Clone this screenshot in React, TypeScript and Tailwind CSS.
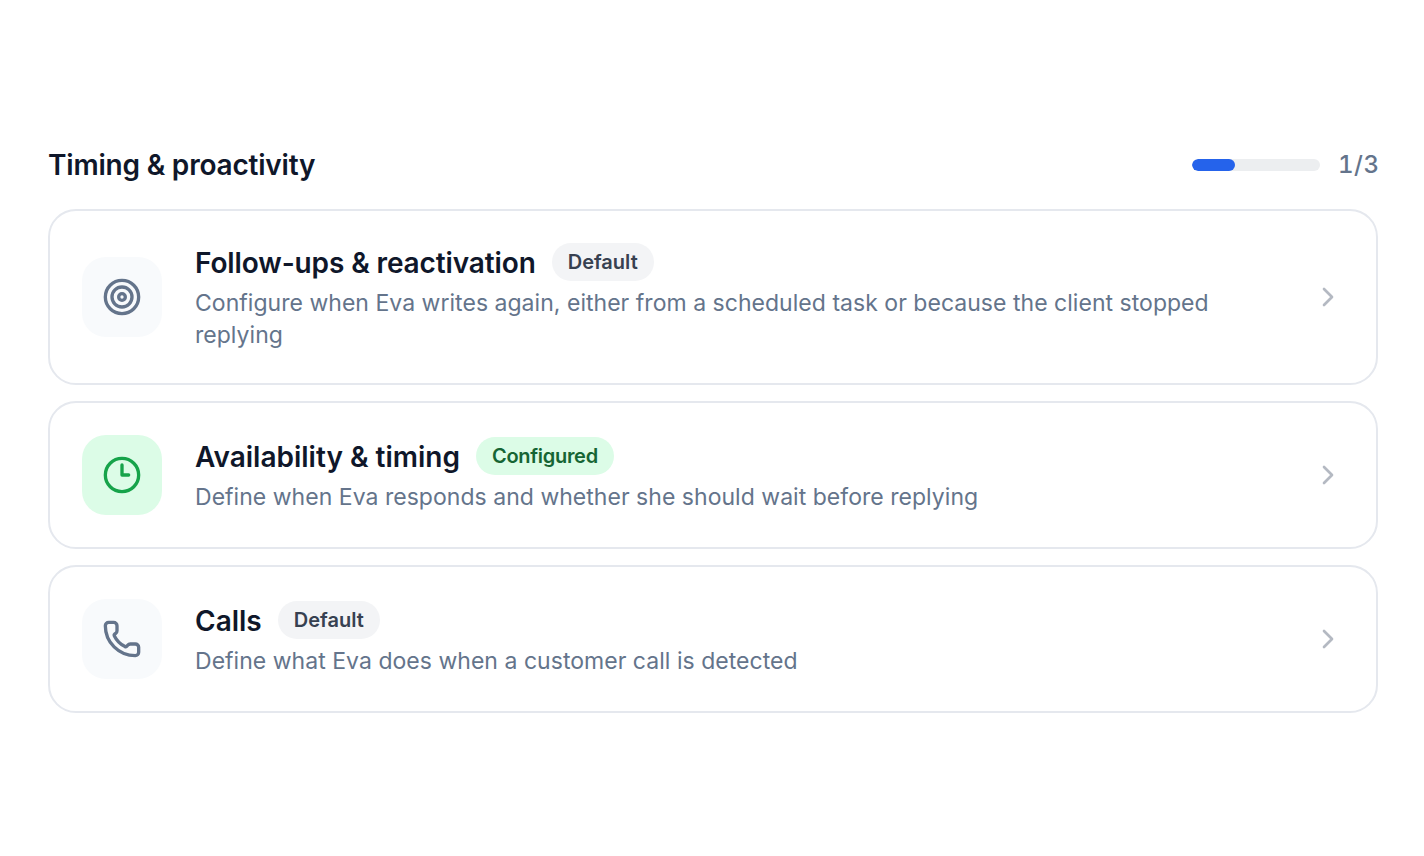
import { ChevronRight, Clock3, Phone, Target, type LucideIcon } from 'lucide-react'

type Item = {
  title: string
  description: string
  status: string
  configured?: boolean
  icon: LucideIcon
}

const items: Item[] = [
  {
    title: 'Follow-ups & reactivation',
    description:
      'Configure when Eva writes again, either from a scheduled task or because the client stopped replying',
    status: 'Default',
    icon: Target,
  },
  {
    title: 'Availability & timing',
    description: 'Define when Eva responds and whether she should wait before replying',
    status: 'Configured',
    configured: true,
    icon: Clock3,
  },
  {
    title: 'Calls',
    description: 'Define what Eva does when a customer call is detected',
    status: 'Default',
    icon: Phone,
  },
]

function SettingCard({ item }: { item: Item }) {
  const Icon = item.icon
  return (
    <div className="flex items-center gap-8 rounded-[28px] border-2 border-[#e5e8ee] bg-white p-8">
      <div
        className={
          item.configured
            ? 'w-20 h-20 rounded-3xl bg-[#dcfce7] flex items-center justify-center flex-shrink-0 text-[#16a34a]'
            : 'w-20 h-20 rounded-3xl bg-[#f8fafc] flex items-center justify-center flex-shrink-0 text-[#64748b]'
        }
      >
        <Icon size={40} strokeWidth={2} />
      </div>
      <div className="flex-1 min-w-0 pl-px">
        <div className="flex items-center gap-4">
          <h3
            className={
              item.title === 'Follow-ups & reactivation'
                ? 'pt-0.5 text-[28px] leading-9 font-semibold text-[#0f172a] tracking-[-0.12px]'
                : 'pt-0.5 text-[28px] leading-9 font-semibold text-[#0f172a]'
            }
          >
            {item.title}
          </h3>
          <span
            className={
              item.configured
                ? 'px-4 h-[38px] flex items-center rounded-full text-[20px] font-semibold bg-[#dcfce7] text-[#166534] tracking-[-0.3px]'
                : 'px-4 h-[38px] flex items-center rounded-full text-[20px] font-semibold bg-[#f3f4f6] text-[#374151]'
            }
          >
            {item.status}
          </span>
        </div>
        <p className="mt-1.5 text-[23px] leading-8 tracking-[0.03px] text-[#64748b]">{item.description}</p>
      </div>
      <ChevronRight size={32} className="flex-shrink-0 text-[#b4b9c2]" />
    </div>
  )
}

export default function App() {
  return (
    <div
      className="min-h-[856px] bg-white pt-[147px] pl-12 pr-[46px]"
      style={{ fontFamily: 'Inter, sans-serif' }}
    >
      <div className="flex items-center justify-between mb-[26px]">
        <h2 className="text-[28px] leading-9 font-semibold text-[#0f172a] tracking-[-0.2px]">Timing &amp; proactivity</h2>
        <div className="flex items-center gap-[18px]">
          <div className="w-32 h-3 rounded-full bg-[#eceef0] overflow-hidden">
            <div className="h-full w-1/3 rounded-full bg-[#2563eb]" />
          </div>
          <span className="w-10 text-right text-2xl leading-8 font-medium text-[#64748b] tabular-nums tracking-[0.5px]">1/3</span>
        </div>
      </div>
      <div className="flex flex-col gap-4">
        {items.map((item) => (
          <SettingCard key={item.title} item={item} />
        ))}
      </div>
    </div>
  )
}
